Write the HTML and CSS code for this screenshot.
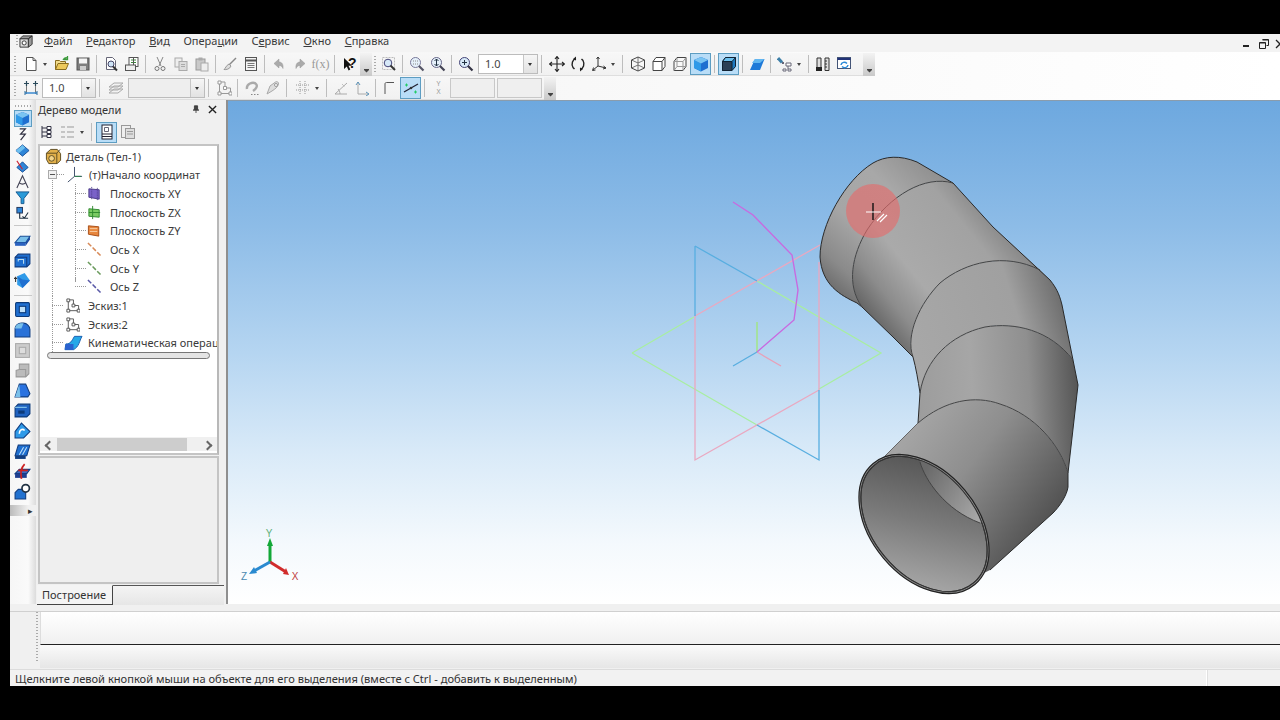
FILE: index.html
```html
<!DOCTYPE html>
<html lang="ru">
<head>
<meta charset="utf-8">
<title>КОМПАС-3D</title>
<link rel="stylesheet" href="styles.css">
</head>
<body>
<svg class="sprite" aria-hidden="true">
  <symbol id="new" viewBox="0 0 16 16"><path d="M3.5 1.5h6.5l3 3v10H3.5z" fill="#fff" stroke="#555"/><path d="M10 1.5v3h3" fill="none" stroke="#555"/></symbol>
  <symbol id="open" viewBox="0 0 16 16"><path d="M1.5 13.5v-9h4l1 1h5v2" fill="#f2dc8c" stroke="#8a6d1f"/><path d="M1.5 13.5l2.5-6h10.500l-2.500 6z" fill="#eec95a" stroke="#8a6d1f"/><path d="M9 4c1-2 3-2.500 4.500-2M13.500 0v3.500H10" fill="none" stroke="#3c9a3c" stroke-width="1.300"/></symbol>
  <symbol id="save" viewBox="0 0 16 16"><rect x="2" y="2" width="12" height="12" fill="#7d7d7d" stroke="#555"/><rect x="4" y="2.500" width="8" height="5" fill="#f4f4f4"/><rect x="5" y="10" width="6" height="4" fill="#ccc"/></symbol>
  <symbol id="prev" viewBox="0 0 16 16"><path d="M3.500 1.500h6l3 3v9h-9z" fill="#fff" stroke="#667"/><circle cx="8" cy="8" r="3" fill="#cfe4f6" stroke="#446"/><path d="M10 10.500l4 4" stroke="#333" stroke-width="2"/></symbol>
  <symbol id="tdoc" viewBox="0 0 16 16"><rect x="5" y="1.500" width="9" height="9" fill="#fff" stroke="#555"/><path d="M7 4h5M7 6.500h5" stroke="#3a8a3a"/><rect x="1.500" y="9" width="10" height="5.500" fill="#eee" stroke="#555"/><path d="M9.500 2v7" stroke="#555"/></symbol>
  <symbol id="cut" viewBox="0 0 16 16"><path d="M5 1l4 9M11 1l-4 9" stroke="#888" fill="none"/><circle cx="5" cy="12.500" r="2" fill="none" stroke="#777"/><circle cx="11" cy="12.500" r="2" fill="none" stroke="#777"/></symbol>
  <symbol id="copy" viewBox="0 0 16 16"><rect x="2" y="2" width="7" height="9" fill="#eee" stroke="#aaa"/><rect x="6" y="5.500" width="8" height="9" fill="#ddd" stroke="#aaa"/><path d="M8 8.500h4M8 10.500h4" stroke="#aaa"/></symbol>
  <symbol id="paste" viewBox="0 0 16 16"><rect x="2" y="3" width="9" height="11" fill="#c9c9c9" stroke="#999"/><rect x="4.500" y="1.500" width="4" height="3" fill="#aaa"/><rect x="7" y="7" width="7" height="8" fill="#eee" stroke="#aaa"/></symbol>
  <symbol id="brush" viewBox="0 0 16 16"><path d="M14 2L7 9" stroke="#888" stroke-width="1.500"/><path d="M7 8l2 2c-1 3-5 4-7 3.500 1.500-1 2-4 5-5.500z" fill="#ddd" stroke="#999"/></symbol>
  <symbol id="table" viewBox="0 0 16 16"><rect x="2.500" y="1.500" width="11" height="13" fill="#f4f4f4" stroke="#555"/><path d="M2.500 4.500h11" stroke="#555" stroke-width="2"/><path d="M4.500 7.500h7M4.500 9.500h7M4.500 11.500h7" stroke="#777"/></symbol>
  <symbol id="undo" viewBox="0 0 16 16"><path d="M8 3L3 7.500 8 12V9.500c2 0 3 1 4 3 .5-4-1-6.500-4-6.500z" fill="#aaa" stroke="#999" stroke-width=".5"/></symbol>
  <symbol id="redo" viewBox="0 0 16 16"><path d="M8 3l5 4.500L8 12V9.500c-2 0-3 1-4 3-.5-4 1-6.500 4-6.500z" fill="#aaa" stroke="#999" stroke-width=".5"/></symbol>
  <symbol id="arrowq" viewBox="0 0 16 16"><path d="M3 2v11l2.800-2.600 1.800 4 1.700-.8-1.800-3.800H11z" fill="#111"/></symbol>
  <symbol id="zoomw" viewBox="0 0 16 16"><rect x="1.500" y="1.500" width="12" height="12" fill="#f4f4f4" stroke="#bbb" stroke-dasharray="2 1"/><circle cx="7" cy="7" r="3.800" fill="#d7e9f8" stroke="#447"/><path d="M9.500 9.500l4.500 4.500" stroke="#333" stroke-width="2"/></symbol>
  <symbol id="zoomp" viewBox="0 0 16 16"><circle cx="6.500" cy="6.500" r="5" fill="#d7e9f8" stroke="#447"/><path d="M10 10l4.500 4.500" stroke="#334" stroke-width="2.200"/><path d="M4 6.500h5M6.500 4v5" stroke="#234"/></symbol>
  <symbol id="zoomd" viewBox="0 0 16 16"><circle cx="6.500" cy="6.500" r="5" fill="#e5f0fa" stroke="#779"/><path d="M10 10l4.500 4.500" stroke="#556" stroke-width="2.200"/><path d="M4 5h5M4 8h5" stroke="#8a8a8a" stroke-dasharray="1 1"/></symbol>
  <symbol id="zoomf" viewBox="0 0 16 16"><circle cx="6.500" cy="6.500" r="5" fill="#e5f0fa" stroke="#668"/><path d="M10 10l4.500 4.500" stroke="#445" stroke-width="2.200"/><path d="M6.500 3v7M4.500 5l2-2 2 2M4.500 8l2 2 2-2" fill="none" stroke="#234"/></symbol>
  <symbol id="move" viewBox="0 0 16 16"><path d="M8 .5v15M.5 8h15M6 3l2-2.500L10 3M6 13l2 2.500 2-2.500M3 6L.5 8 3 10M13 6l2.500 2-2.500 2" fill="none" stroke="#222" stroke-width="1.100"/></symbol>
  <symbol id="rot" viewBox="0 0 16 16"><path d="M6 2.500C2.500 3.500 1 8 3 11.500l1.500 1.500M10 13.500c3.500-1 5-5.500 3-9L11.500 3" fill="none" stroke="#222" stroke-width="1.400"/><path d="M6 .5v4l-3-1.500zM10 15.500v-4l3 1.500z" fill="#222"/></symbol>
  <symbol id="axes" viewBox="0 0 16 16"><path d="M7 1v9l-5 4M7 10l8 2" fill="none" stroke="#333"/><path d="M5.500 3L7 1l1.500 2M2.500 11.500L1.500 14.500l3-.5M12.500 10l2.500 2-3 1" fill="none" stroke="#333"/></symbol>
  <symbol id="cw1" viewBox="0 0 16 16"><path d="M8 1l6.500 3v8L8 15l-6.500-3V4z" fill="#f8f8f8" stroke="#444"/><path d="M1.500 4L8 7l6.500-3M8 7v8M8 1v6M1.500 12L8 9l6.500 3" fill="none" stroke="#555" stroke-width=".8"/></symbol>
  <symbol id="cw2" viewBox="0 0 16 16"><path d="M5 1.500h9v9l-3 4H2v-9z" fill="#fff" stroke="#444"/><path d="M2 5.500h9v9M11 5.500l3-4" fill="none" stroke="#444"/></symbol>
  <symbol id="cw3" viewBox="0 0 16 16"><path d="M5 1.500h9v9l-3 4H2v-9z" fill="#f8f8f8" stroke="#444"/><path d="M2 5.500h9v9M11 5.500l3-4M5 2v8.500h9M5 10.500l-3 4" fill="none" stroke="#999"/></symbol>
  <symbol id="cube" viewBox="0 0 16 16"><path d="M8 1l7 3v8l-7 3.500L1 12V4z" fill="#1f6fd0"/><path d="M1 4l7 3.500V15.500L1 12z" fill="#2f9ae8"/><path d="M8 1l7 3-7 3.500L1 4z" fill="#7ac4f2"/></symbol>
  <symbol id="cubed" viewBox="0 0 16 16"><path d="M4.500 1.500h10v9l-3.500 4H1.500v-9z" fill="#1f7ac0" stroke="#123"/><path d="M1.500 5.500h9.500v9H1.500z" fill="#2c3f55" stroke="#123"/><path d="M1.500 5.500l3-4h10l-3.500 4z" fill="#6cc0ee" stroke="#123"/></symbol>
  <symbol id="wedge" viewBox="0 0 16 16"><path d="M6 3h9.500L11 14H1z" fill="#1f7ad8"/><path d="M6 3h9.500L11 7H3z" fill="#62b6f0"/></symbol>
  <symbol id="filt" viewBox="0 0 16 16"><path d="M1 2l4 4.500" stroke="#3d7fa8" stroke-width="3"/><rect x="5" y="6" width="2" height="2" fill="#667"/><path d="M9 7h5v3H9zM6 13h3v2H6zM11 13h3v2h-3z" fill="#fff" stroke="#667"/><path d="M11 10v3" stroke="#667"/></symbol>
  <symbol id="meas" viewBox="0 0 16 16"><rect x="1" y="11" width="6" height="4" fill="#222"/><path d="M2 11V2h4v9M10 2h4v12.500h-4zM10 5h2M10 8h2M10 11h2" fill="#ddd" stroke="#333"/></symbol>
  <symbol id="upd" viewBox="0 0 16 16"><rect x="1.500" y="1.500" width="13" height="11" fill="#fff" stroke="#457"/><path d="M1.500 3h13" stroke="#237" stroke-width="2"/><path d="M5 9c.500-3 4-3.500 6-1.500M12 9c-.500 3-4 3.500-6 1.500" fill="none" stroke="#2a8ad8" stroke-width="1.500"/></symbol>
  <symbol id="snap" viewBox="0 0 16 16"><path d="M1 3.500h5M3.500 1v5M10 3.500h5M12.500 1v5" stroke="#2a4a5a" stroke-width="1.200"/><path d="M3.500 6v8M12.500 6v8" stroke="#777"/><path d="M2 13h12" stroke="#3a8ad0" stroke-width="1.500"/><path d="M2 11v4M14 11v4" stroke="#2a6a9a"/></symbol>
  <symbol id="sgrid" viewBox="0 0 16 16"><path d="M1 5h14M1 10h14M5 1v14M10 1v14" stroke="#999" stroke-dasharray="1 1"/></symbol>
  <symbol id="layer" viewBox="0 0 16 16"><path d="M1 7l5-4h9l-5 4zM1 10l5-4h9l-5 4zM1 13l5-4h9l-5 4z" fill="#f2f2f2" stroke="#aaa"/></symbol>
  <symbol id="sk" viewBox="0 0 16 16"><path d="M3.500 2v11.500h11V8H9V2z" fill="none" stroke="#555"/><path d="M2 1h3v3H2zM2 12h3v3H2zM13 12h3v3h-3zM7.500 6.500h3v3h-3z" fill="#fff" stroke="#555"/></symbol>
  <symbol id="skg" viewBox="0 0 16 16"><path d="M3.500 2v11.500h11V8H9V2z" fill="none" stroke="#999"/><path d="M2 1h3v3H2zM2 12h3v3H2zM13 12h3v3h-3zM7.500 6.500h3v3h-3z" fill="#fff" stroke="#999"/></symbol>
  <symbol id="hook" viewBox="0 0 16 16"><path d="M3 9c-1-5 6-8 9-5 2 2 0 5-3 7" fill="none" stroke="#aaa" stroke-width="2.400"/><path d="M7 14.500h1.500M10 14.500h1.500M13 14.500h1.500" stroke="#888"/></symbol>
  <symbol id="clip" viewBox="0 0 16 16"><path d="M2 14l5-3c3-2 6-4 6.500-7 .2-2-1.500-3-3-2L5 6z" fill="#ddd" stroke="#aaa"/><circle cx="11" cy="5" r="1.500" fill="#fff" stroke="#999"/></symbol>
  <symbol id="dim1" viewBox="0 0 16 16"><path d="M2 14L14 3M2 14h12M7 14c0-2-1-4-2-5" fill="none" stroke="#aaa"/><path d="M9 4l3 3" stroke="#aaa" stroke-dasharray="1 1"/></symbol>
  <symbol id="dim2" viewBox="0 0 16 16"><path d="M4 2v12h10" fill="none" stroke="#aaa"/><path d="M2 5l2-3 2 3M12 12l3 2-3 2" fill="none" stroke="#5a92b8"/></symbol>
  <symbol id="corner" viewBox="0 0 16 16"><path d="M3 14V4c0-1 .5-1.500 1.500-1.500H12" fill="none" stroke="#555"/></symbol>
  <symbol id="live" viewBox="0 0 16 16"><path d="M1 12L15 4" stroke="#223" stroke-width="1.200"/><path d="M2 5h3M3.500 3.500v3M11 12h3M12.500 10.500v3" stroke="#2c6"/><circle cx="8" cy="8" r="1.300" fill="#333"/></symbol>
  <symbol id="part" viewBox="0 0 18 18"><path d="M6 1.500h7l3.500 4.500v7L13 16.500H4L1.500 12V5.500z" fill="#e2b04a" stroke="#5b4a20"/><path d="M1.500 5.500h11l3.500-4M12.500 5.500v11" fill="none" stroke="#5b4a20"/><circle cx="7" cy="11" r="3" fill="#f3d48a" stroke="#5b4a20"/></symbol>
  <symbol id="origin" viewBox="0 0 18 18"><path d="M9 1v10M9 11H17M9 11l-7 6" fill="none" stroke="#3a4a68"/><path d="M9 11h7" stroke="#2a7f4a"/></symbol>
  <symbol id="pxy" viewBox="0 0 16 16"><path d="M2 3l11 1v10L2 12z" fill="#7a62c8" stroke="#4a3a88"/><path d="M5 1v13M11 2v13" stroke="#4a3a88" stroke-dasharray="1 1"/></symbol>
  <symbol id="pzx" viewBox="0 0 16 16"><path d="M2 4l11 1v8L2 12z" fill="#7acb62" stroke="#2f8a2f"/><path d="M6 1v14M2 8h12" stroke="#2f8a2f"/></symbol>
  <symbol id="pzy" viewBox="0 0 16 16"><path d="M1.500 3l11 1v10l-11-2z" fill="#e8863c" stroke="#a84e18"/><path d="M3 6h8M3 9h8" stroke="#f7d0a8"/></symbol>
  <symbol id="ox" viewBox="0 0 16 16"><path d="M1 1l14 14" stroke="#d88a58" stroke-width="1.600" stroke-dasharray="5 2"/></symbol>
  <symbol id="oy" viewBox="0 0 16 16"><path d="M1 1l14 14" stroke="#6a9a5c" stroke-width="1.600" stroke-dasharray="5 2"/></symbol>
  <symbol id="oz" viewBox="0 0 16 16"><path d="M1 1l14 14" stroke="#5a5aa8" stroke-width="1.600" stroke-dasharray="5 2"/></symbol>
  <symbol id="kin" viewBox="0 0 20 16"><path d="M2 9c5 0 6-3 9-8h8c-3 5-3 11-9 14H1z" fill="#25a8e8" stroke="#1a5fb0"/><path d="M2 9h8v6H1z" fill="#2a62d0"/></symbol>
  <symbol id="squig" viewBox="0 0 16 16"><path d="M5 2h6L6 7.500h5L6 14" fill="none" stroke="#334" stroke-width="1.300"/></symbol>
  <symbol id="dia" viewBox="0 0 16 16"><path d="M1 8l7-6 7 6-7 6z" fill="#2f86d8" stroke="#1b4f96"/><path d="M1 8l7-6 3 3-7 6z" fill="#6ec0f0"/></symbol>
  <symbol id="diar" viewBox="0 0 16 16"><path d="M2 9l6-6 6 6-6 5z" fill="#2f86d8" stroke="#1b4f96"/><path d="M2 2l6 9" stroke="#c23" stroke-width="1.200"/></symbol>
  <symbol id="aa" viewBox="0 0 16 16"><path d="M2 15L8 2l6 13M4.500 9.500c2 1.500 5 1.500 7 0" fill="none" stroke="#445" stroke-width="1.200"/></symbol>
  <symbol id="fun" viewBox="0 0 16 16"><path d="M1 2h14L9.500 9v5.500h-3V9z" fill="#2a9ad8" stroke="#165a90"/></symbol>
  <symbol id="skv" viewBox="0 0 16 16"><rect x="2" y="1.500" width="6" height="6" fill="#2f86d8" stroke="#235"/><path d="M5 7v6h9M8 11l2 2 4-6" fill="none" stroke="#234" stroke-width="1.200"/></symbol>
  <symbol id="ex1" viewBox="0 0 16 16"><path d="M1 10l5-6h9l-4 6z" fill="#7ac0ea" stroke="#1b4f96"/><path d="M1 10h10v3H1z" fill="#2a62c0"/><path d="M11 10l4-6v3l-4 6z" fill="#1a4aa0"/></symbol>
  <symbol id="ex2" viewBox="0 0 16 16"><path d="M1 5l3-3h11v9l-3 3H1z" fill="#1f6fd0" stroke="#123e80"/><path d="M1 5h11v9" fill="none" stroke="#123e80"/><path d="M4 9V7h5v4" fill="none" stroke="#bde"/></symbol>
  <symbol id="ex3" viewBox="0 0 16 16"><path d="M3 4l7-3 5 7-7 7-5-3z" fill="#2f9ae8"/><path d="M3 4l5 3 7 1-7 7z" fill="#1f6fd0"/><path d="M0 6h3M1.500 4.500v5" stroke="#333"/></symbol>
  <symbol id="ex4" viewBox="0 0 16 16"><rect x="1.500" y="1.500" width="13" height="13" fill="#1f6fd0" stroke="#0d3a78" rx="1"/><rect x="5" y="5" width="6" height="6" fill="#bfe0f8" stroke="#0d3a78"/></symbol>
  <symbol id="ex5" viewBox="0 0 16 16"><path d="M1 15V7c0-3 3-5 6-5h2c3 0 6 3 6 6v7z" fill="#2a72d8" stroke="#123e80"/><path d="M1 7c0-3 3-5 6-5h2L7 7z" fill="#7ac0ea"/></symbol>
  <symbol id="ex6" viewBox="0 0 16 16"><rect x="1.500" y="1.500" width="13" height="13" fill="#ccc" stroke="#aaa"/><rect x="5" y="5" width="6" height="6" fill="#ddd" stroke="#aaa"/></symbol>
  <symbol id="ex7" viewBox="0 0 16 16"><path d="M2 14V8l3-1V2h9v9l-3 3z" fill="#bbb" stroke="#999"/><path d="M5 7h6v7" fill="none" stroke="#999"/></symbol>
  <symbol id="ex8" viewBox="0 0 16 16"><path d="M1 14L5 2h6l4 9-2 3z" fill="#2a72e0" stroke="#123e80"/><path d="M5 2L1 14h5z" fill="#7ac0ea"/></symbol>
  <symbol id="ex9" viewBox="0 0 16 16"><path d="M1 5l3-3h11v9l-3 3H1z" fill="#1f62c0" stroke="#0d3a78"/><path d="M4 8h6v3H4z" fill="#0d3a78"/><path d="M1 5h11" stroke="#8fd0f0"/></symbol>
  <symbol id="ex10" viewBox="0 0 16 16"><path d="M1 9l6-8 8 8-6 6H1z" fill="#2f9ae8" stroke="#123e80"/><path d="M5 11c0-4 3-5 5-3" fill="none" stroke="#fff" stroke-width="1.500"/></symbol>
  <symbol id="ex11" viewBox="0 0 16 16"><path d="M1 12l3-10h11l-3 10z" fill="#1f6fd0" stroke="#123e80"/><path d="M5 11l4-7M8 11l4-7" stroke="#bfe0f8"/><path d="M1 12h10v3H1z" fill="#123e80"/></symbol>
  <symbol id="ex12" viewBox="0 0 16 16"><path d="M1 10l4-4h10l-3 4z" fill="#3f6ac0" stroke="#123e80"/><path d="M1 10h11v4H1z" fill="#1f3f90"/><path d="M10 1C6 5 6 10 7 15M4 7h9" fill="none" stroke="#c22" stroke-width="1.600"/></symbol>
  <symbol id="ex13" viewBox="0 0 16 16"><path d="M1 9l3-3h7v9H1z" fill="#2272d0" stroke="#123e80"/><circle cx="11" cy="5" r="3.500" fill="#fff" stroke="#234" stroke-width="1.600"/></symbol>
  <symbol id="logo" viewBox="0 0 16 16"><path d="M1 5h9v9H1z" fill="#ddd" stroke="#333"/><path d="M1 5l3-3h10l-4 3zM10 5l4-3v9l-4 3z" fill="#999" stroke="#333"/><circle cx="5.500" cy="9.500" r="2.200" fill="#fff" stroke="#333"/></symbol>
  <symbol id="tdot" viewBox="0 0 16 16"><path d="M4 2v12M4 4h5M4 8h5M4 12h5" fill="none" stroke="#334"/><path d="M9 2.500h4v3H9zM9 6.500h4v3H9zM9 10.500h4v3H9z" fill="#fff" stroke="#334"/></symbol>
  <symbol id="tchk" viewBox="0 0 16 16"><path d="M1 3h4M1 8h4M1 13h4M7 3h7M7 8h7M7 13h7" stroke="#999"/></symbol>
  <symbol id="page" viewBox="0 0 16 16"><rect x="3" y="1" width="10" height="14" fill="#fff" stroke="#223"/><path d="M3 10h10M3 12.500h10" stroke="#223"/><path d="M5.500 3.500h4v4h-4z" fill="none" stroke="#667"/></symbol>
  <symbol id="pages" viewBox="0 0 16 16"><rect x="1.500" y="1.500" width="9" height="12" fill="#eee" stroke="#999"/><rect x="5.500" y="4.500" width="9" height="10" fill="#ddd" stroke="#999"/><path d="M7 7.500h6M7 10h6" stroke="#999"/></symbol>
</svg>

<div class="window">
  <div class="menubar">
    <span class="grip g-menu"></span>
    <svg class="i logo"><use href="#logo"/></svg>
    <span class="menu"><u>Ф</u>айл</span>
    <span class="menu"><u>Р</u>едактор</span>
    <span class="menu"><u>В</u>ид</span>
    <span class="menu">Опера<u>ц</u>ии</span>
    <span class="menu">С<u>е</u>рвис</span>
    <span class="menu"><u>О</u>кно</span>
    <span class="menu"><u>С</u>правка</span>
    <span class="winctl">
      <span class="wmin"></span>
      <svg class="wres" viewBox="0 0 10 10"><path d="M3.500.5h6v6h-2M.5 3.500h6v6h-6z" fill="none" stroke="#222"/><path d="M3.500 1h6M.5 4h6" stroke="#222"/></svg>
      <svg class="wclose" viewBox="0 0 10 10"><path d="M1 1l8 8M9 1l-8 8" stroke="#222" stroke-width="1.300"/></svg>
    </span>
  </div>

  <div class="tbrow">
    <div class="band">
      <span class="grip"></span>
      <span class="b"><svg class="i"><use href="#new"/></svg></span><span class="a"></span>
      <span class="b"><svg class="i"><use href="#open"/></svg></span>
      <span class="b"><svg class="i"><use href="#save"/></svg></span><span class="s"></span>
      <span class="b"><svg class="i"><use href="#prev"/></svg></span>
      <span class="b"><svg class="i"><use href="#tdoc"/></svg></span><span class="s"></span>
      <span class="b"><svg class="i"><use href="#cut"/></svg></span>
      <span class="b"><svg class="i"><use href="#copy"/></svg></span>
      <span class="b"><svg class="i"><use href="#paste"/></svg></span><span class="s"></span>
      <span class="b"><svg class="i"><use href="#brush"/></svg></span>
      <span class="b"><svg class="i"><use href="#table"/></svg></span><span class="s"></span>
      <span class="b"><svg class="i"><use href="#undo"/></svg></span>
      <span class="b"><svg class="i"><use href="#redo"/></svg></span>
      <span class="b fx">f(x)</span><span class="s"></span>
      <span class="b help"><svg class="i"><use href="#arrowq"/></svg><b class="q">?</b></span>
      <span class="chev"></span>
    </div>
    <div class="band">
      <span class="grip short"></span>
      <span class="b"><svg class="i"><use href="#zoomw"/></svg></span><span class="s"></span>
      <span class="b"><svg class="i"><use href="#zoomd"/></svg></span>
      <span class="b"><svg class="i"><use href="#zoomf"/></svg></span><span class="s"></span>
      <span class="b"><svg class="i"><use href="#zoomp"/></svg></span>
      <span class="combo c60"><span class="val">1.0</span><span class="cbtn"></span></span><span class="s w"></span>
      <span class="b"><svg class="i"><use href="#move"/></svg></span>
      <span class="b"><svg class="i"><use href="#rot"/></svg></span>
      <span class="b"><svg class="i"><use href="#axes"/></svg></span><span class="a"></span><span class="s w"></span>
      <span class="b"><svg class="i"><use href="#cw1"/></svg></span>
      <span class="b"><svg class="i"><use href="#cw2"/></svg></span>
      <span class="b"><svg class="i"><use href="#cw3"/></svg></span>
      <span class="b on"><svg class="i"><use href="#cube"/></svg></span><span class="s"></span>
      <span class="b on"><svg class="i"><use href="#cubed"/></svg></span><span class="s"></span>
      <span class="b"><svg class="i"><use href="#wedge"/></svg></span><span class="s"></span>
      <span class="b"><svg class="i"><use href="#filt"/></svg></span><span class="a"></span><span class="s"></span>
      <span class="b"><svg class="i"><use href="#meas"/></svg></span>
      <span class="b"><svg class="i"><use href="#upd"/></svg></span>
      <span class="chev far"></span>
    </div>
  </div>

  <div class="tbrow">
    <div class="band">
      <span class="grip"></span>
      <span class="b"><svg class="i"><use href="#snap"/></svg></span>
      <span class="combo c54"><span class="val">1.0</span><span class="cbtn"></span></span><span class="s x"></span>
      <span class="b"><svg class="i"><use href="#layer"/></svg></span>
      <span class="combo c77 dis"><span class="val"></span><span class="cbtn"></span></span><span class="s w"></span>
      <span class="b"><svg class="i"><use href="#skg"/></svg></span><span class="s"></span>
      <span class="b"><svg class="i"><use href="#hook"/></svg></span>
      <span class="b"><svg class="i"><use href="#clip"/></svg></span><span class="s x"></span>
      <span class="b"><svg class="i"><use href="#sgrid"/></svg></span><span class="a"></span><span class="s"></span>
      <span class="b"><svg class="i"><use href="#dim1"/></svg></span>
      <span class="b"><svg class="i"><use href="#dim2"/></svg></span><span class="s"></span>
      <span class="b"><svg class="i"><use href="#corner"/></svg></span>
      <span class="b on"><svg class="i"><use href="#live"/></svg></span><span class="s"></span>
      <span class="b yx">Y<br>X</span>
      <span class="field"></span><span class="field"></span>
      <span class="chev"></span>
    </div>
  </div>

  <div class="main">
    <div class="lbar">
      <span class="grip-h"></span>
      <span class="vb on"><svg class="i"><use href="#cube"/></svg></span>
      <span class="vb"><svg class="i"><use href="#squig"/></svg></span>
      <span class="vb"><svg class="i"><use href="#dia"/></svg></span>
      <span class="vb"><svg class="i"><use href="#diar"/></svg></span>
      <span class="vb"><svg class="i"><use href="#aa"/></svg></span>
      <span class="vb"><svg class="i"><use href="#fun"/></svg></span>
      <span class="vb"><svg class="i"><use href="#skv"/></svg></span>
      <span class="vs"></span>
      <span class="vc"><svg class="i"><use href="#ex1"/></svg></span>
      <span class="vc"><svg class="i"><use href="#ex2"/></svg></span>
      <span class="vc"><svg class="i"><use href="#ex3"/></svg></span>
      <span class="vs"></span>
      <span class="vc"><svg class="i"><use href="#ex4"/></svg></span>
      <span class="vc"><svg class="i"><use href="#ex5"/></svg></span>
      <span class="vc"><svg class="i"><use href="#ex6"/></svg></span>
      <span class="vc"><svg class="i"><use href="#ex7"/></svg></span>
      <span class="vc"><svg class="i"><use href="#ex8"/></svg></span>
      <span class="vc"><svg class="i"><use href="#ex9"/></svg></span>
      <span class="vc"><svg class="i"><use href="#ex10"/></svg></span>
      <span class="vc"><svg class="i"><use href="#ex11"/></svg></span>
      <span class="vc"><svg class="i"><use href="#ex12"/></svg></span>
      <span class="vc"><svg class="i"><use href="#ex13"/></svg></span>
      <span class="vend">▸</span>
    </div>

    <div class="panel">
      <div class="ptitle">
        <span class="ptext">Дерево модели</span>
        <svg class="pin" viewBox="0 0 10 10"><path d="M3 1h4v4l1.500 1.500h-7L3 5zM5 6.500V10" fill="#444" stroke="#333"/></svg>
        <svg class="pclose" viewBox="0 0 10 10"><path d="M1 1l8 8M9 1l-8 8" stroke="#222" stroke-width="1.500"/></svg>
      </div>
      <div class="ptools">
        <span class="b"><svg class="i"><use href="#tdot"/></svg></span>
        <span class="b nar"><svg class="i"><use href="#tchk"/></svg></span><span class="a"></span><span class="s w"></span>
        <span class="b on"><svg class="i"><use href="#page"/></svg></span>
        <span class="b"><svg class="i"><use href="#pages"/></svg></span>
      </div>
      <div class="treebox">
        <div class="row root"><svg class="ti t18"><use href="#part"/></svg><span>Деталь (Тел-1)</span></div>
        <div class="row l1 g1"><span class="plus"></span><span class="dots d8"></span><svg class="ti t18"><use href="#origin"/></svg><span>(т)Начало координат</span></div>
        <div class="row l2 g1 g2"><span class="dots d12"></span><svg class="ti"><use href="#pxy"/></svg><span>Плоскость XY</span></div>
        <div class="row l2 g1 g2"><span class="dots d12"></span><svg class="ti"><use href="#pzx"/></svg><span>Плоскость ZX</span></div>
        <div class="row l2 g1 g2"><span class="dots d12"></span><svg class="ti"><use href="#pzy"/></svg><span>Плоскость ZY</span></div>
        <div class="row l2 g1 g2"><span class="dots d12"></span><svg class="ti"><use href="#ox"/></svg><span>Ось X</span></div>
        <div class="row l2 g1 g2"><span class="dots d12"></span><svg class="ti"><use href="#oy"/></svg><span>Ось Y</span></div>
        <div class="row l2 g1 g2e"><span class="dots d12"></span><svg class="ti"><use href="#oz"/></svg><span>Ось Z</span></div>
        <div class="row l3 g1"><span class="dots d12"></span><svg class="ti"><use href="#sk"/></svg><span>Эскиз:1</span></div>
        <div class="row l3 g1"><span class="dots d12"></span><svg class="ti"><use href="#sk"/></svg><span>Эскиз:2</span></div>
        <div class="row l3 g1 clip"><span class="dots d12"></span><svg class="ti t20"><use href="#kin"/></svg><span>Кинематическая операция:1</span></div>
        <div class="pill"></div>
        <div class="hscroll">
          <span class="sarrow left"></span>
          <span class="thumb"></span>
          <span class="sarrow right"></span>
        </div>
      </div>
      <div class="propbox"></div>
      <div class="tabs"><span class="tab">Построение</span></div>
    </div>

    <div class="view">
      <svg class="scene" viewBox="228 101 1052 503">
        <defs>
          <linearGradient id="gA" gradientUnits="userSpaceOnUse" x1="945" y1="170" x2="835" y2="295"><stop offset="0" stop-color="#8c8c8c"/><stop offset=".3" stop-color="#a8a8a8"/><stop offset=".6" stop-color="#a6a6a6"/><stop offset=".85" stop-color="#8a8a8a"/><stop offset="1" stop-color="#6a6a6a"/></linearGradient>
          <linearGradient id="gB" gradientUnits="userSpaceOnUse" x1="1020" y1="225" x2="885" y2="335"><stop offset="0" stop-color="#7a7a7a"/><stop offset=".25" stop-color="#a2a2a2"/><stop offset=".65" stop-color="#aaa"/><stop offset=".85" stop-color="#8c8c8c"/><stop offset="1" stop-color="#666"/></linearGradient>
          <linearGradient id="gC" gradientUnits="userSpaceOnUse" x1="1072" y1="320" x2="910" y2="370"><stop offset="0" stop-color="#6a6a6a"/><stop offset=".3" stop-color="#a0a0a0"/><stop offset="1" stop-color="#a8a8a8"/></linearGradient>
          <linearGradient id="gD" gradientUnits="userSpaceOnUse" x1="1078" y1="380" x2="915" y2="390"><stop offset="0" stop-color="#555"/><stop offset=".3" stop-color="#8f8f8f"/><stop offset=".65" stop-color="#a6a6a6"/><stop offset="1" stop-color="#9c9c9c"/></linearGradient>
          <linearGradient id="gE" gradientUnits="userSpaceOnUse" x1="905" y1="440" x2="1040" y2="540"><stop offset="0" stop-color="#a4a4a4"/><stop offset=".4" stop-color="#8e8e8e"/><stop offset="1" stop-color="#505050"/></linearGradient>
          <linearGradient id="gI" gradientUnits="userSpaceOnUse" x1="880" y1="480" x2="960" y2="585"><stop offset="0" stop-color="#585858"/><stop offset=".45" stop-color="#7a7a7a"/><stop offset="1" stop-color="#aaa"/></linearGradient>
          <linearGradient id="gJ" gradientUnits="userSpaceOnUse" x1="925" y1="470" x2="985" y2="510"><stop offset="0" stop-color="#6a6a6a"/><stop offset="1" stop-color="#a8a8a8"/></linearGradient>
          <clipPath id="bore"><ellipse cx="924" cy="524" rx="77" ry="51" transform="rotate(50 924 524)"/></clipPath>
        </defs>

        <g fill="none" stroke-width="1.300">
          <g stroke="#a8eea0">
            <path d="M632 353L694 317M757 281L881 353L819 389M632 353L757 425"/>
          </g>
          <g stroke="#eaa8c0">
            <path d="M695 316L820 245M695 316V460L819 390M819 262V390"/>
          </g>
          <g stroke="#58aee0">
            <path d="M695 246L757 281M695 246V316M757 425L819 460V390"/>
          </g>
          <path d="M757 322V352" stroke="#a0e878"/>
          <path d="M757 352L733 366" stroke="#58aee0"/>
          <path d="M757 352L781 366" stroke="#e8a0b8"/>
          <path d="M733 202L753 215L792 255L798 290L794 320L757 352" stroke="#c86ae0" stroke-width="1.400"/>
        </g>

        <path fill="url(#gA)" d="M820 257C820 225 845 180 873 163C885 156 900 155 917 162L953 183C925 175 890 195 867 230C852 255 846 285 862 307L857 303C840 295 822 285 820 257Z"/>
        <path fill="url(#gB)" d="M953 183L993 227L1040 270C1005 252 965 262 940 283C920 303 905 335 913 357L893 337L862 307C846 285 852 255 867 230C890 195 925 175 953 183Z"/>
        <path fill="url(#gC)" d="M1040 270L1050 280C1058 290 1060 297 1062 305L1073 360C1050 330 1015 322 985 327C950 335 925 360 920 393C918 380 916 368 913 357C905 335 920 303 940 283C965 262 1005 252 1040 270Z"/>
        <path fill="url(#gD)" d="M1073 360L1078 385L1068 473C1060 445 1035 415 1000 404C975 395 945 400 918 423L920 393C925 360 950 335 985 327C1015 322 1050 330 1073 360Z"/>
        <path fill="url(#gE)" d="M918 423C945 400 975 395 1000 404C1035 415 1060 445 1068 473L1068 487C1067 495 1060 506 1053 513L990 570L950 590L870 470L885 456Z"/>

        <g fill="none" stroke="#2a2a2a" stroke-width="1">
          <path d="M820 257C820 225 845 180 873 163C885 156 900 155 917 162L953 183L993 227L1050 280C1058 290 1060 297 1062 305L1073 360L1078 385L1068 473L1068 487C1067 495 1060 506 1053 513L990 570"/>
          <path d="M820 257C822 285 840 295 857 303L862 307L893 337L913 357C916 368 918 380 920 393L918 423"/>
          <path stroke="#444" d="M953 183C925 175 890 195 867 230C852 255 846 285 862 307"/>
          <path stroke="#444" d="M1040 270C1005 252 965 262 940 283C920 303 905 335 913 357"/>
          <path stroke="#444" d="M1073 360C1050 330 1015 322 985 327C950 335 925 360 920 393"/>
          <path stroke="#444" d="M918 423C945 400 975 395 1000 404C1035 415 1060 445 1068 473"/>
          <path stroke="#666" d="M918 423L885 456"/>
        </g>

        <ellipse cx="924" cy="524" rx="79" ry="53" transform="rotate(50 924 524)" fill="#8a8a8a" stroke="#222" stroke-width="1.200"/>
        <ellipse cx="924" cy="524" rx="77" ry="51" transform="rotate(50 924 524)" fill="url(#gI)" stroke="#333"/>
        <g clip-path="url(#bore)">
          <path d="M920 462C925 480 945 510 980 523L1010 490L950 430Z" fill="url(#gJ)"/>
          <path d="M920 462C925 480 945 510 980 523" fill="none" stroke="#444"/>
        </g>
        <ellipse cx="924" cy="524" rx="77" ry="51" transform="rotate(50 924 524)" fill="none" stroke="#333"/>

        <circle cx="873" cy="211" r="27" fill="#e66a6a" fill-opacity=".62"/>
        <path d="M873 203V220" stroke="#111" stroke-width="1.400"/>
        <path d="M866 212H881M877 221L884 214M880 222L887 215" stroke="#fff" stroke-width="1.200"/>

        <g class="triad">
          <path d="M270 562V544" stroke="#13a838" stroke-width="3"/>
          <path d="M267 546l3-8 3 8z" fill="#13a838"/>
          <path d="M270 562L286 572" stroke="#d12c2c" stroke-width="3"/>
          <path d="M283 574l6 1-3-7z" fill="#d12c2c"/>
          <path d="M270 562L254 571" stroke="#2a8ad0" stroke-width="3"/>
          <path d="M257 573l-8 1 5-7z" fill="#2a8ad0"/>
          <text x="269" y="537" class="ty">Y</text>
          <text x="295" y="580" class="tx">X</text>
          <text x="244" y="580" class="tz">Z</text>
        </g>
      </svg>
    </div>
  </div>

  <div class="cmd">
    <span class="grip cmdgrip"></span>
    <div class="cmdcol">
      <div class="cmdtop"></div>
      <div class="cmdbot"></div>
    </div>
  </div>

  <div class="status">
    <span class="stext">Щелкните левой кнопкой мыши на объекте для его выделения (вместе с Ctrl - добавить к выделенным)</span>
    <span class="ssep"></span>
  </div>
</div>
</body>
</html>
```

FILE: styles.css
```css
* { box-sizing: border-box; }
html, body { margin: 0; height: 100%; }
body {
  background: #000;
  overflow: hidden;
  font-family: "Noto Sans", "Liberation Sans", sans-serif;
  font-size: 11px;
  color: #333;
}
.sprite { position: absolute; width: 0; height: 0; }

.window {
  margin: 34px 0 0 10px;
  height: 652px;
  display: flex;
  flex-direction: column;
  background: #f0f0f0;
}
.i { width: 16px; height: 16px; display: block; flex: none; }

/* menu */
.menubar {
  height: 18px;
  display: flex;
  align-items: center;
  padding-bottom: 4px;
  background: #f3f3f3;
  flex: none;
}
.logo { margin: 0 10px 0 0; width: 15px; height: 15px; }
.menu { margin-right: 13.700px; font-size: 11px; color: #3a3a3a; line-height: 16px; white-space: nowrap; }
.menu u { text-decoration-thickness: 1px; }
.winctl { margin-left: auto; display: flex; align-items: center; gap: 6px; margin-right: -5px; padding-top: 6px; }
.wmin { width: 6px; height: 2px; background: #222; margin-top: 3px; margin-right: 4px; }
.wres { width: 10px; height: 10px; }
.wclose { width: 10px; height: 10px; }

/* toolbars */
.tbrow {
  height: 24px;
  flex: none;
  display: flex;
  padding-top: 1px;
  background: linear-gradient(to right, #f2f2f2, #fafafa 60%, #fff);
}
.band {
  display: flex;
  align-items: center;
  height: 23px;
  background: linear-gradient(#f7f7f7, #f1f1f1);
  border-bottom: 1px solid #dedede;
}
.grip {
  width: 10px;
  height: 16px;
  flex: none;
  background-image: linear-gradient(#aaa 50%, transparent 50%);
  background-size: 2px 3px;
  background-repeat: repeat-y;
  background-position: 4px 0;
}
.grip.short { width: 6px; background-position: 2px 0; }
.grip.g-menu { margin-left: 5px; width: 4px; height: 12px; background-position: 1px 0; }
.b { width: 21px; height: 22px; flex: none; display: flex; align-items: center; justify-content: center; position: relative; }
.b.nar { margin-left: 1px; }
.b.on { background: #b9ddf7; border: 1px solid #5d9dc2; }
.a { width: 10px; height: 22px; flex: none; position: relative; }
.a::after { content: ""; position: absolute; left: 2px; top: 10px; border: 2.500px solid transparent; border-top: 3px solid #444; border-bottom: 0; }
.s { width: 7px; height: 20px; flex: none; position: relative; }
.s::after { content: ""; position: absolute; left: 3px; top: 1px; bottom: 1px; width: 1px; background: #bdbdbd; }
.s.w { width: 8px; }
.s.x { width: 9px; }
.chev {
  width: 12px;
  height: 23px;
  flex: none;
  position: relative;
  background: linear-gradient(#f3f3f3, #c9c9c9);
  margin-left: 1px;
}
.chev::after { content: ""; position: absolute; left: 4px; bottom: 3px; width: 5px; height: 4px; background: #444; clip-path: polygon(0 0, 100% 0, 100% 40%, 50% 100%, 0 40%); }
.chev.far { margin-left: 9px; }
.fx { font-family: "Liberation Serif", serif; color: #999; font-size: 12px; }
.help .q { position: absolute; left: 10px; top: 2px; font-family: "Liberation Sans", sans-serif; font-size: 14px; color: #111; }
.yx { color: #999; font-size: 7px; line-height: 8px; text-align: center; display: block; padding-top: 3px; }

.combo {
  display: flex;
  height: 20px;
  flex: none;
  margin-left: 1px;
  background: #fff;
  border: 1px solid #bcbcbc;
}
.c60 { width: 60px; margin-left: 2px; }
.c54 { width: 54px; }
.c77 { width: 77px; margin-left: 2px; background: #eee; }
.val { flex: 1; padding-left: 6px; font-size: 11px; line-height: 18px; color: #444; }
.cbtn { width: 14px; position: relative; background: linear-gradient(#f6f6f6, #e2e2e2); border-left: 1px solid #c6c6c6; }
.cbtn::after { content: ""; position: absolute; left: 4px; top: 8px; border: 2.500px solid transparent; border-top: 3px solid #333; border-bottom: 0; }
.field { width: 45px; height: 20px; flex: none; margin-left: 1px; margin-right: 1px; background: #efefef; border: 1px solid #c8c8c8; }

/* main */
.main { flex: none; height: 504px; display: flex; }
.lbar {
  width: 26px;
  flex: none;
  display: flex;
  flex-direction: column;
  align-items: center;
  padding-top: 5px;
  background: linear-gradient(to right, #f6f6f6, #fafafa 70%, #dcdcdc);
}
.grip-h { width: 16px; height: 4px; flex: none; background-image: linear-gradient(to right, #aaa 50%, transparent 50%); background-size: 3px 2px; background-repeat: repeat-x; }
.vb { height: 15.700px; flex: none; display: flex; align-items: center; justify-content: center; width: 18px; margin-left: -1px; }
.vb .i { width: 15px; height: 15px; }
.vc .i { width: 17px; height: 17px; }
.vb.on { background: #b9ddf7; border: 1px solid #5d9dc2; height: 17px; margin-top: 1px; }
.vc { height: 20.200px; flex: none; display: flex; align-items: center; justify-content: center; width: 18px; margin-left: -1px; }
.vs { height: 5px; width: 18px; flex: none; border-bottom: 1px solid #c8c8c8; margin-bottom: 4px; }
.vend { margin-top: 3px; width: 26px; height: 11px; flex: none; font-size: 9px; line-height: 11px; color: #333; text-align: right; padding-right: 3px; background: linear-gradient(to right, #bbb, #f0f0f0 70%); }

.panel {
  width: 192px;
  flex: none;
  display: flex;
  flex-direction: column;
  background: #f0f0f0;
  border-right: 2px solid #8f8f8f;
  padding-left: 2px;
}
.ptitle { height: 20px; flex: none; display: flex; align-items: center; padding-bottom: 2px; }
.ptext { font-size: 11px; color: #333; }
.pin { width: 8px; height: 8px; margin-left: auto; margin-right: 8px; }
.pclose { width: 9px; height: 9px; margin-right: 9px; }
.ptools { height: 24px; flex: none; display: flex; align-items: center; }
.ptools .b { height: 21px; }
.ptools .b:first-child { margin-left: -3px; }

.treebox {
  width: 181px;
  height: 311px;
  flex: none;
  display: flex;
  flex-direction: column;
  background: #fff;
  border: 2px solid #c4c4c4;
  border-right-color: #b8b8b8;
  padding: 1px 0 2px;
}
.row {
  height: 18.650px;
  flex: none;
  display: flex;
  align-items: center;
  white-space: nowrap;
  overflow: hidden;
  font-size: 11px;
  color: #3a3a3a;
  background-repeat: no-repeat;
}
.root { padding-left: 5px; }
.root .ti { margin-right: 4px; }
.ti { width: 15px; height: 15px; flex: none; margin-right: 7px; }
.t18 { width: 17px; height: 17px; }
.g1 { background-image: linear-gradient(#999 50%, transparent 50%); background-size: 1px 2px; background-repeat: repeat-y; background-position: 12px 0; }
.g1.g2 { background-image: linear-gradient(#999 50%, transparent 50%), linear-gradient(#999 50%, transparent 50%); background-size: 1px 2px, 1px 2px; background-repeat: repeat-y, repeat-y; background-position: 12px 0, 35px 0; }
.g2e { background-image: linear-gradient(#999 50%, transparent 50%), linear-gradient(#999 50%, transparent 50%); background-size: 1px 2px, 1px 10px; background-repeat: repeat-y, no-repeat; background-position: 12px 0, 35px 0; }
.plus { width: 9px; height: 9px; flex: none; margin-left: 8px; background: #f2f2f2; border: 1px solid #aaa; position: relative; }
.plus::after { content: ""; position: absolute; left: 1px; right: 1px; top: 3px; height: 1px; background: #555; }
.dots { height: 1px; flex: none; background-image: linear-gradient(to right, #999 50%, transparent 50%); background-size: 2px 1px; }
.d8 { width: 8px; margin-right: 1px; }
.d12 { width: 12px; }
.l1 .ti { margin-right: 6px; }
.l2 { padding-left: 35px; }
.l2 .ti { margin-right: 8px; }
.l3 { padding-left: 12px; }
.l3 .ti { margin-left: 1px; margin-right: 8px; }
.l3 .t20 { width: 19px; height: 16px; margin-left: 0; margin-right: 5px; }
.pill { margin: 0 7px; height: 7px; flex: none; border: 1px solid #777; border-radius: 4px; background: #e4e4e4; }
.hscroll { margin-top: auto; height: 14px; flex: none; display: flex; align-items: center; background: #f0f0f0; }
.thumb { width: 130px; height: 13px; background: #cdcdcd; }
.sarrow { width: 17px; height: 13px; position: relative; flex: none; }
.sarrow.right { margin-left: auto; }
.sarrow::after { content: ""; position: absolute; top: 4px; width: 5px; height: 5px; border-left: 2px solid #666; border-bottom: 2px solid #666; }
.left::after { left: 6px; transform: rotate(45deg); }
.right::after { right: 6px; transform: rotate(225deg); }
.propbox { width: 181px; height: 128px; flex: none; margin-top: 1px; background: #efefef; border: 2px solid #c4c4c4; }
.tabs { flex: 1; display: flex; margin-left: -1px; margin-right: 2px; margin-top: 1px; border-top: 1px solid #555; background: linear-gradient(#f4f4f4, #e6e6e6); }
.tab { width: 76px; margin-top: -1px; padding-left: 5px; font-size: 11px; line-height: 18px; color: #333; background: #f4f4f4; border-right: 1px solid #444; border-bottom: 1px solid #444; border-top: 1px solid #f4f4f4; }

/* viewport */
.view {
  flex: 1;
  min-width: 0;
  border-top: 1px solid #8a9cac;
  background: linear-gradient(#6da8df 0%, #8dbce7 25%, #b5d5f1 50%, #d9eaf8 70%, #f4f9fd 88%, #fff 100%);
  overflow: hidden;
}
.scene { display: block; width: 1052px; height: 503px; }
.triad text { font-size: 10px; font-family: "Liberation Sans", sans-serif; }
.ty { fill: #5fb07a; text-anchor: middle; }
.tx { fill: #c04040; text-anchor: middle; }
.tz { fill: #4a8ab0; text-anchor: middle; }

/* command panel */
.cmd { margin-top: 7px; height: 58px; flex: none; display: flex; padding-left: 26px; background: #f0f0f0; border-top: 1px solid #d0d0d0; }
.cmdgrip { width: 4px; height: 50px; background-position: 0 0; }
.cmdcol { flex: 1; display: flex; flex-direction: column; min-width: 0; }
.cmdtop { height: 33px; flex: none; background: linear-gradient(#fff, #f0f0f0); border-bottom: 1px solid #222; border-left: 1px solid #ddd; }
.cmdbot { height: 23px; flex: none; background: linear-gradient(#fafafa, #e6e6e6); }

.status { height: 17px; flex: none; display: flex; align-items: center; padding-left: 5px; border-top: 1px solid #dcdcdc; background: #f2f2f2; }
.stext { font-size: 11.100px; color: #333; white-space: nowrap; }
.ssep { margin-left: auto; margin-right: 72px; width: 2px; height: 16px; background: #e0e0e0; border-left: 1px solid #fff; }
```
